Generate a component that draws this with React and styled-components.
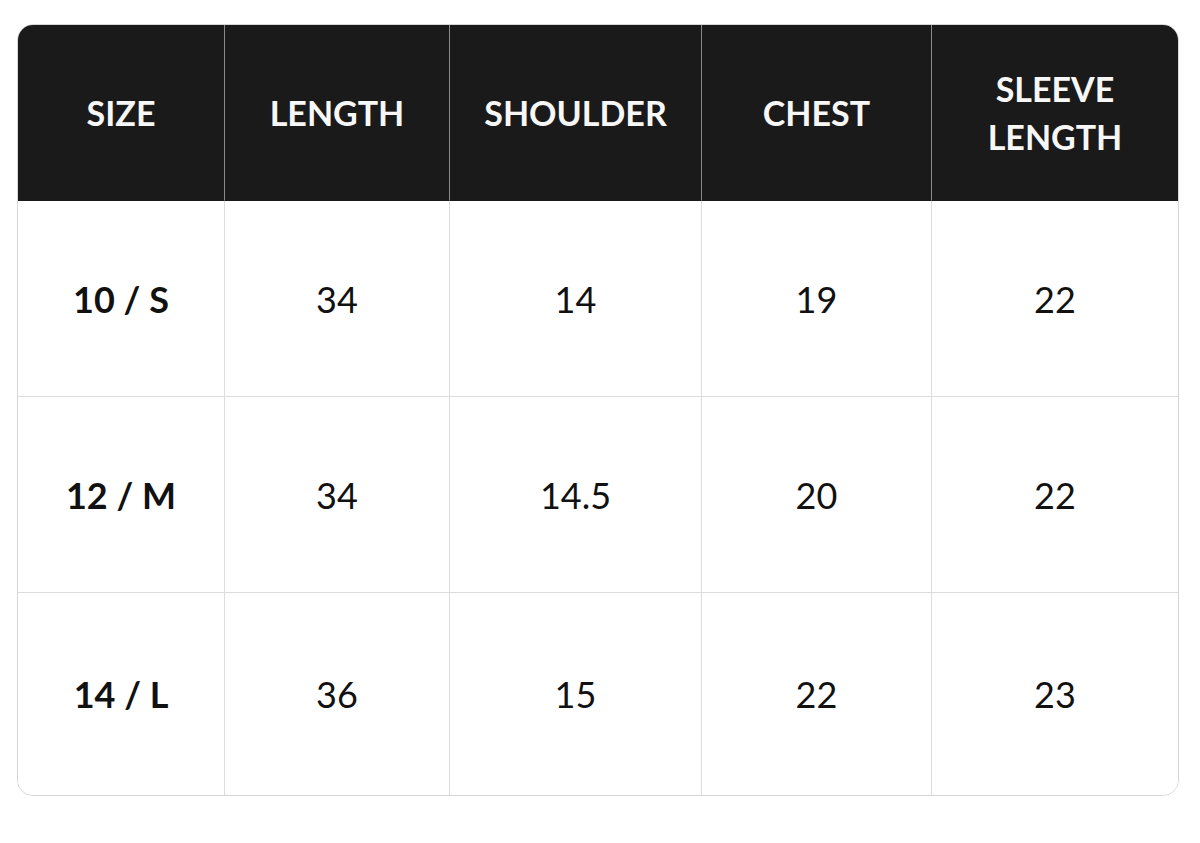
import React from 'react';
import styled, { createGlobalStyle } from 'styled-components';

const GlobalStyle = createGlobalStyle`
  html, body {
    margin: 0;
    padding: 0;
    background: #ffffff;
  }
  body {
    font-family: Lato, "Noto Sans", "Liberation Sans", sans-serif;
  }
`;

const Page = styled.div`
  padding: 24px 22px 0 17px;
`;

const Table = styled.div`
  display: grid;
  grid-template-columns: 207px 225px 252px 230px 246px;
  grid-template-rows: 176px 196px 196px 202px;
  width: max-content;
  border: 1px solid #d6d6d6;
  border-radius: 16px;
  overflow: hidden;
`;

const HeadCell = styled.div`
  display: flex;
  align-items: center;
  justify-content: center;
  box-sizing: border-box;
  background: #1a1a1a;
  color: #f7f7f7;
  font-size: 34px;
  font-weight: 700;
  line-height: 48px;
  text-align: center;
  border-bottom: 1px solid #1a1a1a;
  border-right: ${p => (p.$last ? 'none' : '1px solid #8a8a8a')};
`;

const Cell = styled.div`
  display: flex;
  align-items: center;
  justify-content: center;
  box-sizing: border-box;
  background: #ffffff;
  color: #111111;
  font-size: 36px;
  font-weight: ${p => (p.$strong ? 700 : 400)};
  border-right: ${p => (p.$last ? 'none' : '1px solid #dcdcdc')};
  border-bottom: ${p => (p.$bottom ? 'none' : '1px solid #dcdcdc')};
`;

const columns = ['SIZE', 'LENGTH', 'SHOULDER', 'CHEST', ['SLEEVE', 'LENGTH']];

const rows = [
  ['10 / S', '34', '14', '19', '22'],
  ['12 / M', '34', '14.5', '20', '22'],
  ['14 / L', '36', '15', '22', '23'],
];

export default function App() {
  return (
    <>
      <GlobalStyle />
      <Page>
        <Table>
          {columns.map((col, i) => (
            <HeadCell key={i} $last={i === columns.length - 1}>
              {Array.isArray(col) ? (
                <span>{col[0]}<br />{col[1]}</span>
              ) : col}
            </HeadCell>
          ))}
          {rows.map((row, r) =>
            row.map((val, c) => (
              <Cell
                key={r + '-' + c}
                $strong={c === 0}
                $last={c === row.length - 1}
                $bottom={r === rows.length - 1}
              >
                {val}
              </Cell>
            ))
          )}
        </Table>
      </Page>
    </>
  );
}
